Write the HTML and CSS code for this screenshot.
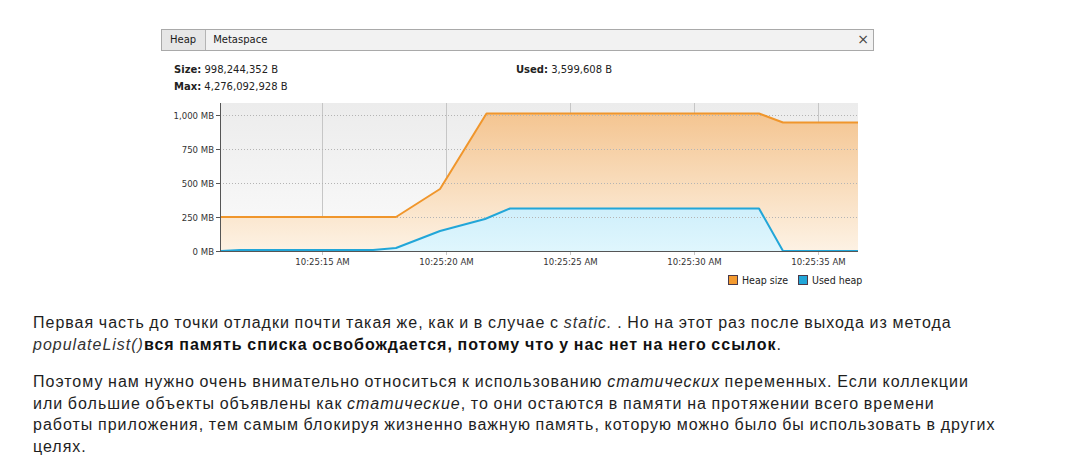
FILE: index.html
```html
<!DOCTYPE html>
<html lang="ru">
<head>
<meta charset="utf-8">
<link rel="stylesheet" href="styles.css">
</head>
<body>
<div class="page">
  <div class="figure">
    <div class="tabbar">
      <div class="tab active">Heap</div>
      <div class="tab">Metaspace</div>
      <div class="tabfill"></div>
      <div class="close">×</div>
    </div>
    <div class="stats">
      <div class="col">
        <div class="row"><b>Size:</b> 998,244,352 B</div>
        <div class="row"><b>Max:</b> 4,276,092,928 B</div>
      </div>
      <div class="col">
        <div class="row"><b>Used:</b> 3,599,608 B</div>
      </div>
    </div>
    <svg class="chart" width="713" height="195" viewBox="161 95 713 195" xmlns="http://www.w3.org/2000/svg">
      <defs>
        <linearGradient id="bg" x1="0" y1="0" x2="0" y2="1">
          <stop offset="0" stop-color="#ececec"/>
          <stop offset="1" stop-color="#fbfbfb"/>
        </linearGradient>
        <linearGradient id="heapfill" gradientUnits="userSpaceOnUse" x1="0" y1="112" x2="0" y2="250">
          <stop offset="0" stop-color="#f4c591"/>
          <stop offset="1" stop-color="#fdf2e4"/>
        </linearGradient>
        <linearGradient id="usedfill" gradientUnits="userSpaceOnUse" x1="0" y1="207" x2="0" y2="250">
          <stop offset="0" stop-color="#cfeffb"/>
          <stop offset="1" stop-color="#dff6fd"/>
        </linearGradient>
      </defs>
      <rect x="220" y="102" width="638" height="148" fill="url(#bg)"/>
      <g stroke="#c6c6c6" stroke-width="1">
        <line x1="322.5" y1="102" x2="322.5" y2="254"/>
        <line x1="446.5" y1="102" x2="446.5" y2="254"/>
        <line x1="570.5" y1="102" x2="570.5" y2="254"/>
        <line x1="694.5" y1="102" x2="694.5" y2="254"/>
        <line x1="818.5" y1="102" x2="818.5" y2="254"/>
      </g>
      <path d="M220 216 L396 216 L440 188 L486.5 112.5 L759 112.5 L783 121.5 L858 121.5 L858 250 L220 250 Z" fill="url(#heapfill)"/>
      <path d="M220 250 L240 249 L373 249 L396 247 L440 230 L485 218 L510 207.5 L759 207.5 L783 250 Z" fill="url(#usedfill)"/>
      <g stroke="#b4b4b4" stroke-width="1" stroke-dasharray="1 2">
        <line x1="220" y1="114.5" x2="858" y2="114.5"/>
        <line x1="220" y1="148.5" x2="858" y2="148.5"/>
        <line x1="220" y1="182.5" x2="858" y2="182.5"/>
        <line x1="220" y1="216.5" x2="858" y2="216.5"/>
      </g>
      <path d="M220 216 L396 216 L440 188 L486.5 112.5 L759 112.5 L783 121.5 L858 121.5" fill="none" stroke="#f0962c" stroke-width="2" stroke-linejoin="round"/>
      <path d="M221 250 L240 249 L373 249 L396 247 L440 230 L485 218 L510 207.5 L759 207.5 L783 250 L858 250" fill="none" stroke="#22a6d8" stroke-width="2" stroke-linejoin="round"/>
      <line x1="220.5" y1="102" x2="220.5" y2="251" stroke="#555" stroke-width="1"/>
      <line x1="220" y1="250.5" x2="858" y2="250.5" stroke="#555" stroke-width="1"/>
      <g stroke="#555" stroke-width="1">
        <line x1="216" y1="114.5" x2="220" y2="114.5"/>
        <line x1="216" y1="148.5" x2="220" y2="148.5"/>
        <line x1="216" y1="182.5" x2="220" y2="182.5"/>
        <line x1="216" y1="216.5" x2="220" y2="216.5"/>
        <line x1="216" y1="250.5" x2="220" y2="250.5"/>
      </g>
      <g class="ylab" text-anchor="end">
        <text x="214" y="118">1,000 MB</text>
        <text x="214" y="152">750 MB</text>
        <text x="214" y="186">500 MB</text>
        <text x="214" y="220">250 MB</text>
        <text x="214" y="254">0 MB</text>
      </g>
      <g class="xlab" text-anchor="middle">
        <text x="322.5" y="264">10:25:15 AM</text>
        <text x="446.5" y="264">10:25:20 AM</text>
        <text x="570.5" y="264">10:25:25 AM</text>
        <text x="694.5" y="264">10:25:30 AM</text>
        <text x="818.5" y="264">10:25:35 AM</text>
      </g>
      <rect x="728.5" y="274.5" width="9" height="9" fill="#f39a2f" stroke="#4a3a4a"/>
      <text class="leg" x="742" y="283">Heap size</text>
      <rect x="798.5" y="274.5" width="9" height="9" fill="#22a6d8" stroke="#4a3a4a"/>
      <text class="leg" x="812" y="283">Used heap</text>
    </svg>
  </div>

  <p class="text">Первая часть до точки отладки почти такая же, как и в случае с <i class="code">static.</i> . Но на этот раз после выхода из метода <i class="code">populateList()</i><b>вся память списка освобождается, потому что у нас нет на него ссылок</b>.</p>
  <p class="text">Поэтому нам нужно очень внимательно относиться к использованию <i>статических</i> переменных. Если коллекции или большие объекты объявлены как <i>статические</i>, то они остаются в памяти на протяжении всего времени работы приложения, тем самым блокируя жизненно важную память, которую можно было бы использовать в других целях.</p>
</div>
</body>
</html>
```

FILE: styles.css
```css
html, body {
  margin: 0;
  padding: 0;
  background: #ffffff;
}

.page {
  padding: 29px 0 0 33px;
  width: 965px;
}

.figure {
  margin-left: 128px;
  width: 713px;
  font-family: "DejaVu Sans", Verdana, sans-serif;
  font-size: 10px;
  color: #222;
}

.tabbar {
  display: flex;
  height: 20px;
  border: 1px solid #a9a9a9;
  background: #f2f2f2;
  box-sizing: content-box;
}

.tab {
  padding: 0 8px 0 7px;
  line-height: 20px;
  color: #1a1a1a;
}

.tab.active {
  background: #e6e6e6;
  border-right: 1px solid #b4b4b4;
  padding: 0 9px 0 8px;
}

.tabfill {
  flex: 1;
}

.close {
  width: 20px;
  text-align: center;
  line-height: 19px;
  font-size: 14px;
  color: #444;
}

.stats {
  display: flex;
  padding: 10px 0 0 13px;
  height: 34px;
}

.stats .col {
  width: 342px;
}

.stats .row {
  line-height: 17px;
  height: 17px;
}

.stats b {
  font-weight: bold;
}

.chart {
  display: block;
  margin-top: 1px;
}

.chart text {
  font-family: "DejaVu Sans Condensed", "DejaVu Sans", sans-serif;
  font-stretch: condensed;
  font-size: 9.5px;
  fill: #333;
}

.chart .leg {
  font-size: 10.5px;
  fill: #222;
}

.text {
  font-family: "Liberation Sans", Arial, sans-serif;
  font-size: 16px;
  line-height: 21.5px;
  letter-spacing: 1px;
  word-spacing: -0.8px;
  color: #1e1e1e;
  margin: 21px 0 16px 0;
}

.text + .text {
  margin-top: 16px;
}

.text i.code {
  color: #333;
}

.text b {
  font-weight: bold;
  color: #111;
}
```
